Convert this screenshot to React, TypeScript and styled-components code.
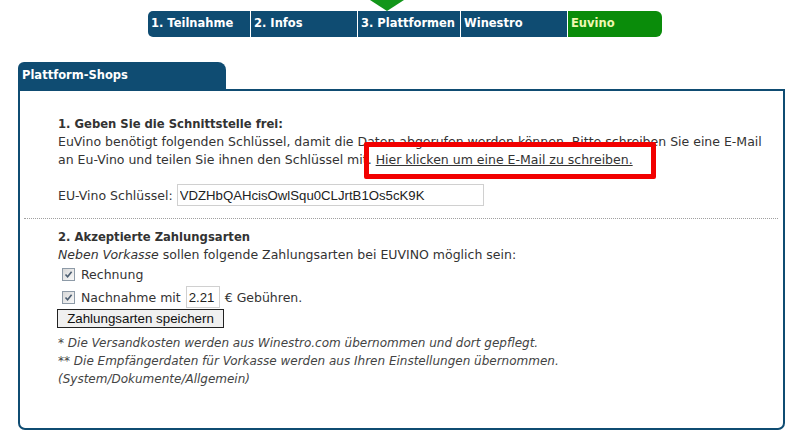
import React from 'react';
import styled, { createGlobalStyle } from 'styled-components';

const BLUE = '#0f4c72';
const GREEN = '#0a8c0a';

const GlobalStyle = createGlobalStyle`
  body {
    margin: 0;
    background: #fff;
    font-family: "DejaVu Sans", Verdana, sans-serif;
    font-size: 12.5px;
    color: #333;
  }
`;

interface Step {
  label: string;
  width: number;
  active?: boolean;
  current?: boolean;
}

const steps: Step[] = [
  { label: '1. Teilnahme', width: 102 },
  { label: '2. Infos', width: 107 },
  { label: '3. Plattformen', width: 103, active: true },
  { label: 'Winestro', width: 107 },
  { label: 'Euvino', width: 95, current: true },
];

const App: React.FC = () => {
  return (
    <Page>
      <GlobalStyle />
      <StepNav>
        {steps.map((step, i) => (
          <StepTab
            key={step.label}
            $width={step.width}
            $active={step.active}
            $current={step.current}
            $first={i === 0}
          >
            {step.label}
          </StepTab>
        ))}
      </StepNav>

      <Panel>
        <PanelTab>Plattform-Shops</PanelTab>
        <PanelBody>
          <Section>
            <SectionTitle>1. Geben Sie die Schnittstelle frei:</SectionTitle>
            <Text>
              EuVino benötigt folgenden Schlüssel, damit die Daten abgerufen werden können. Bitte schreiben Sie eine E-Mail
              <br />
              an Eu-Vino und teilen Sie ihnen den Schlüssel mit.{' '}
              <MailLink href="#">Hier klicken um eine E-Mail zu schreiben.</MailLink>
            </Text>
            <KeyRow>
              <span>EU-Vino Schlüssel:</span>
              <KeyInput readOnly value="VDZHbQAHcisOwlSqu0CLJrtB1Os5cK9K" />
            </KeyRow>
          </Section>

          <Divider />

          <Section $tight>
            <SectionTitle>2. Akzeptierte Zahlungsarten</SectionTitle>
            <Text>
              <em>Neben Vorkasse</em> sollen folgende Zahlungsarten bei EUVINO möglich sein:
            </Text>
            <CheckRow>
              <CheckBox />
              Rechnung
            </CheckRow>
            <CheckRow $tall>
              <CheckBox />
              Nachnahme mit
              <FeeInput readOnly value="2.21" />
              € Gebühren.
            </CheckRow>
            <SaveButton type="button">Zahlungsarten speichern</SaveButton>
            <Notes>
              <div>* Die Versandkosten werden aus Winestro.com übernommen und dort gepflegt.</div>
              <div>** Die Empfängerdaten für Vorkasse werden aus Ihren Einstellungen übernommen.</div>
              <div>(System/Dokumente/Allgemein)</div>
            </Notes>
          </Section>
        </PanelBody>
      </Panel>
    </Page>
  );
};

const CheckBox: React.FC = () => (
  <CheckFrame>
    <svg width="9" height="9" viewBox="0 0 9 9">
      <path d="M1.5 4.5 L3.6 6.8 L7.6 1.8" fill="none" stroke="#4b5d70" strokeWidth="1.6" />
    </svg>
  </CheckFrame>
);

// Styled components
const Page = styled.div`
  width: 801px;
  padding-top: 11px;
`;

const StepNav = styled.div`
  display: flex;
  justify-content: center;
  padding-left: 9px;
`;

const StepTab = styled.div<{ $width: number; $active?: boolean; $current?: boolean; $first?: boolean }>`
  position: relative;
  box-sizing: border-box;
  width: ${p => p.$width}px;
  height: 26px;
  line-height: 25px;
  padding-left: 3px;
  white-space: nowrap;
  background: ${p => (p.$current ? GREEN : BLUE)};
  color: ${p => (p.$current ? '#f0f7b0' : '#fff')};
  font-weight: bold;
  font-size: 11.5px;
  border-left: ${p => (p.$first ? 'none' : '1px solid #fff')};
  border-radius: ${p => (p.$first ? '5px 0 0 5px' : p.$current ? '0 6px 6px 0' : '0')};

  ${p =>
    p.$active &&
    `
    &::before {
      content: '';
      position: absolute;
      top: -11px;
      left: 12px;
      border-left: 17px solid transparent;
      border-right: 17px solid transparent;
      border-top: 11px solid #12961a;
    }
  `}
`;

const Panel = styled.div`
  margin: 25px 16px 0 18px;
`;

const PanelTab = styled.div`
  width: 208px;
  height: 27px;
  box-sizing: border-box;
  padding-left: 4px;
  line-height: 26px;
  background: ${BLUE};
  color: #fff;
  font-weight: bold;
  font-size: 11.5px;
  border-radius: 6px 8px 0 0;
`;

const PanelBody = styled.div`
  box-sizing: border-box;
  height: 341px;
  border: 2px solid ${BLUE};
  border-radius: 0 0 7px 7px;
  padding-top: 24px;
`;

const Section = styled.div<{ $tight?: boolean }>`
  padding-left: 38px;
  padding-top: ${p => (p.$tight ? '9px' : '0')};
`;

const SectionTitle = styled.div`
  font-weight: bold;
  font-size: 11.6px;
  line-height: 18px;
`;

const Text = styled.div`
  line-height: 18px;
`;

const MailLink = styled.a`
  position: relative;
  color: #333;
  text-decoration: underline;

  &::after {
    content: '';
    position: absolute;
    left: -12px;
    right: -23px;
    top: -10px;
    bottom: -12px;
    border: 5px solid #f20000;
    border-radius: 2px;
    pointer-events: none;
  }
`;

const KeyRow = styled.div`
  display: flex;
  align-items: center;
  gap: 4px;
  margin-top: 15px;
`;

const KeyInput = styled.input`
  box-sizing: border-box;
  width: 307px;
  height: 22px;
  padding: 0 2px;
  border: 1px solid #d0d0d0;
  font-family: "Liberation Sans", Arial, sans-serif;
  font-size: 13.2px;
  color: #222;
  outline: none;
`;

const Divider = styled.div`
  margin: 12px 5px 0 4px;
  border-top: 1px dotted #a0a0a0;
`;

const CheckRow = styled.div<{ $tall?: boolean }>`
  display: flex;
  align-items: center;
  gap: 6px;
  height: ${p => (p.$tall ? '22px' : '19px')};
  padding-left: 4px;
  margin-top: ${p => (p.$tall ? '2px' : '1px')};
`;

const CheckFrame = styled.span`
  box-sizing: border-box;
  display: inline-flex;
  align-items: center;
  justify-content: center;
  width: 13px;
  height: 13px;
  border: 1px solid #8d9aa7;
  background: linear-gradient(135deg, #d8d8d8, #f8f8f8);
`;

const FeeInput = styled.input`
  box-sizing: border-box;
  width: 34px;
  height: 22px;
  margin: 0 -1px;
  padding: 0 2px;
  border: 1px solid #d0d0d0;
  font-family: "Liberation Sans", Arial, sans-serif;
  font-size: 13.2px;
  color: #222;
  outline: none;
`;

const SaveButton = styled.button`
  display: block;
  box-sizing: border-box;
  width: 167px;
  height: 19px;
  margin: 1px 0 0 -1px;
  padding: 0;
  border: 1px solid #222;
  background: #f0f0f0;
  font-family: "Liberation Sans", Arial, sans-serif;
  font-size: 13.33px;
  line-height: 17px;
  color: #111;
`;

const Notes = styled.div`
  margin-top: 6px;
  font-size: 12px;
  line-height: 18px;
  font-style: italic;
  color: #444;
`;

export default App;
